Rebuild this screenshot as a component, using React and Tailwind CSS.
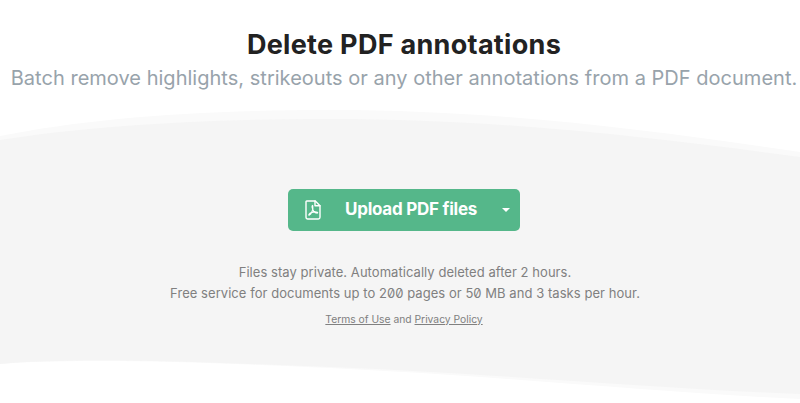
import React from "react";

function PdfIcon() {
  return (
    <svg width="16" height="20" viewBox="0 0 16 20" fill="none" stroke="white" strokeWidth="1.4" strokeLinejoin="round" strokeLinecap="round">
      <path d="M1.700 1h8.600L15 5.700v11.600a1.700 1.700 0 0 1-1.700 1.700H2.700A1.700 1.700 0 0 1 1 17.300V1.700A.7.7 0 0 1 1.700 1Z" />
      <path d="M10 1v4.800h5" />
      <path d="M7.300 5.500c-.5 1 .4 4 1.400 5.600.8 1.200 2.400 2 3.600 2 .5 0 .6-.6.1-.8-1.500-.6-4.500-.3-6.500.5-1.400.6-2.400 1.900-2.100 2.300.4.500 1.800-.8 2.700-2.400 1-1.800 1.700-5.200 1.300-6.900-.1-.4-.4-.5-.5-.3Z" strokeWidth="1.1" />
    </svg>
  );
}

export default function App() {
  return (
    <div className="relative h-[403px] w-[800px] overflow-hidden bg-white font-['Inter',sans-serif]">
      <svg className="absolute inset-0" width="800" height="403" viewBox="0 0 800 403">
        <path d="M0 136C90 118 200 110 330 110C500 110 650 130 800 152V399C650 392 500 376 330 368C200 362 80 358 0 364Z" fill="#fafafa" />
        <path d="M0 140C90 126 200 119 330 119C500 119 650 137 800 157V394C650 388 500 374 330 367C200 362 80 357 0 364Z" fill="#f5f5f5" />
      </svg>
      <div className="relative flex flex-col items-center pl-[8px]">
        <h1 className="mt-[27px] text-[27px] leading-[36px] font-bold tracking-[0.3px] text-[#222222]">Delete PDF annotations</h1>
        <p className="mt-[1px] whitespace-nowrap text-[20px] leading-[28px] tracking-[0.02px] text-[#98a3ab]">
          Batch remove highlights, strikeouts or any other annotations from a PDF document.
        </p>
        <button className="mt-[97px] flex h-[42px] w-[232px] items-center rounded-[5px] bg-[#55b78a] pr-[10px] pl-[17px] text-white">
          <PdfIcon />
          <span className="ml-[24px] text-[17px] font-bold tracking-[-0.25px]">Upload PDF files</span>
          <span className="ml-auto h-0 w-0 border-x-[4px] border-t-[4px] border-x-transparent border-t-white" />
        </button>
        <div className="mt-[31px] ml-[2px] text-center text-[13px] leading-[21px] tracking-[0.05px] text-[#808080] [font-feature-settings:'zero']">
          <p>Files stay private. Automatically deleted after 2 hours.</p>
          <p>Free service for documents up to 200 pages or 50 MB and 3 tasks per hour.</p>
        </div>
        <p className="mt-[7px] text-[10.3px] leading-[16px] text-[#808080]">
          <a className="underline">Terms of Use</a> and <a className="underline">Privacy Policy</a>
        </p>
      </div>
    </div>
  );
}
